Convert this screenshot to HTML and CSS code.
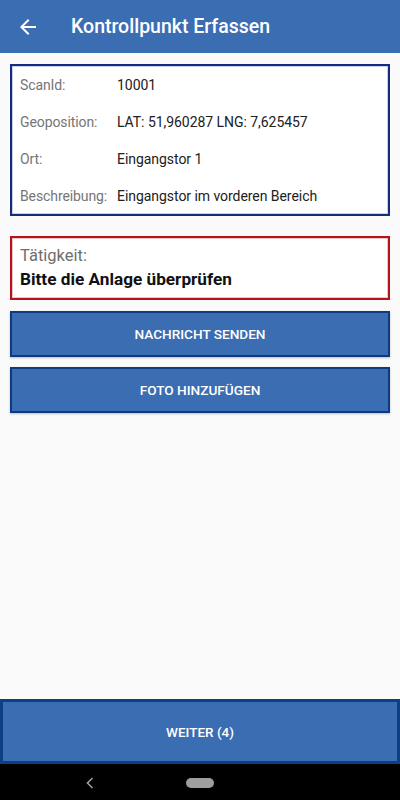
FILE: index.html
```html
<!DOCTYPE html>
<html lang="de">
<head>
<meta charset="utf-8">
<title>Kontrollpunkt Erfassen</title>
<link rel="stylesheet" href="styles.css">
</head>
<body>
<div class="screen">
  <header class="appbar">
    <span class="back">
      <svg width="24" height="24" viewBox="0 0 24 24"><path d="M20 11H7.83l5.59-5.59L12 4l-8 8 8 8 1.41-1.41L7.83 13H20v-2z" fill="#fff"/></svg>
    </span>
    <h1 class="title">Kontrollpunkt Erfassen</h1>
  </header>
  <main class="content">
    <section class="info">
      <div class="row"><span class="label">ScanId:</span><span class="value">10001</span></div>
      <div class="row"><span class="label">Geoposition:</span><span class="value">LAT: 51,960287 LNG: 7,625457</span></div>
      <div class="row"><span class="label">Ort:</span><span class="value">Eingangstor 1</span></div>
      <div class="row"><span class="label">Beschreibung:</span><span class="value">Eingangstor im vorderen Bereich</span></div>
    </section>
    <section class="task">
      <div class="task-label">Tätigkeit:</div>
      <div class="task-text">Bitte die Anlage überprüfen</div>
    </section>
    <button class="btn">NACHRICHT SENDEN</button>
    <button class="btn">FOTO HINZUFÜGEN</button>
  </main>
  <button class="btn-next">WEITER (4)</button>
  <nav class="navbar">
    <span class="nav-back">
      <svg width="8" height="12" viewBox="0 0 8 12"><path d="M6.5 1L1.5 6l5 5" fill="none" stroke="#9e9e9e" stroke-width="1.6"/></svg>
    </span>
    <span class="nav-home"></span>
  </nav>
</div>
</body>
</html>
```
FILE: styles.css
```css
* { box-sizing: border-box; }
html, body { margin: 0; padding: 0; }
body {
  font-family: Roboto, "Noto Sans", sans-serif;
  background: #fafafa;
  color: #212121;
}
.screen {
  width: 400px;
  height: 800px;
  display: flex;
  flex-direction: column;
  overflow: hidden;
}
.appbar {
  height: 53px;
  flex: none;
  background: #3b6db3;
  display: flex;
  align-items: center;
  padding-left: 16px;
}
.back { width: 24px; height: 24px; display: flex; margin-top: 1px; }
.title {
  margin: 0 0 0 31px;
  font-size: 19.5px;
  font-weight: 500;
  color: #fff;
  letter-spacing: 0;
}
.content {
  flex: 1;
  display: flex;
  flex-direction: column;
  padding: 11px 10px 0;
}
.info {
  border: 2px solid #132c82;
  box-shadow: inset 0 0 0 1px #c9d0e2;
  background: #fff;
  padding: 0 8px;
  display: flex;
  flex-direction: column;
}
.row {
  height: 37px;
  display: flex;
  align-items: center;
  font-size: 14px;
  padding-top: 1px;
}
.label { width: 97px; color: #757575; flex: none; letter-spacing: -0.1px; }
.value { color: #212121; letter-spacing: -0.05px; }
.task {
  margin-top: 20px;
  border: 2px solid #b5121b;
  box-shadow: inset 0 0 0 1px #eac6c8;
  background: #fff;
  height: 64px;
  padding: 7px 8px 0;
}
.task-label { font-size: 16.5px; color: #6e6e6e; line-height: 22px; }
.task-text { font-size: 17.2px; font-weight: 700; color: #111; line-height: 22px; margin-top: 1px; }
.btn {
  margin-top: 11px;
  height: 46px;
  background: #3b6db3;
  border: 2px solid #0d3a82;
  box-shadow: 0 1px 2px rgba(0,0,0,0.25);
  color: #fff;
  font-family: inherit;
  font-size: 13.6px;
  font-weight: 500;
  letter-spacing: 0;
  padding: 0;
}
.btn + .btn { margin-top: 10px; }
.btn-next {
  flex: none;
  height: 65px;
  background: #3b6db3;
  border: 3px solid #0d3f86;
  color: #fff;
  font-family: inherit;
  font-size: 13.5px;
  font-weight: 500;
  letter-spacing: 0;
  padding: 0;
}
.navbar {
  flex: none;
  height: 36px;
  background: #000;
  display: flex;
  align-items: center;
  padding-top: 2px;
}
.nav-back { margin-left: 86px; width: 8px; height: 12px; display: flex; }
.nav-home {
  margin-left: 92px;
  width: 28px;
  height: 10px;
  border-radius: 5px;
  background: #9e9e9e;
}
```
